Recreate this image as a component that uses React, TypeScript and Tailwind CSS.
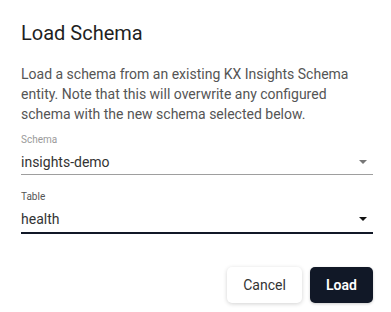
import React from 'react';

const Arrow: React.FC<{ color: string }> = ({ color }) => (
  <svg width="8" height="4" viewBox="0 0 8 4" className="shrink-0">
    <path d="M0 0 L8 0 L4 4 Z" fill={color} />
  </svg>
);

interface SelectFieldProps {
  label: string;
  value: string;
  focused?: boolean;
}

const SelectField: React.FC<SelectFieldProps> = ({ label, value, focused }) => (
  <div className="flex flex-col">
    <span
      className={`text-[10px] leading-[12px] ${focused ? 'text-[#555555]' : 'text-[#9a9a9a]'}`}
    >
      {label}
    </span>
    <div
      className={`mt-[6px] flex items-center justify-between pr-[6px] ${
        focused ? 'border-b-2 border-[#111827] pb-[3px]' : 'border-b border-[#9e9e9e] pb-[2px]'
      }`}
    >
      <span className="text-[14px] leading-[20px] text-[#333333]">{value}</span>
      <Arrow color={focused ? '#111111' : '#777777'} />
    </div>
  </div>
);

export default function App() {
  return (
    <div
      className="w-[391px] h-[312px] bg-white pl-[21px] pr-[18px] pt-[19px]"
      style={{ fontFamily: 'Roboto, "Liberation Sans", sans-serif' }}
    >
      <h2 className="text-[20px] leading-[28px] text-[#1f1f1f]">Load Schema</h2>
      <p className="mt-[17px] text-[14px] leading-[20px] text-[#555555]">
        Load a schema from an existing KX Insights Schema entity. Note that this will overwrite any
        configured schema with the new schema selected below.
      </p>
      <div className="mt-[10px]">
        <SelectField label="Schema" value="insights-demo" />
      </div>
      <div className="mt-[16px]">
        <SelectField label="Table" value="health" focused />
      </div>
      <div className="mt-[33px] flex justify-end gap-[8px]">
        <button className="h-[36px] w-[75px] rounded-[5px] bg-white text-[14px] font-normal text-[#333333] shadow-[0_1px_4px_rgba(0,0,0,0.18)]">
          Cancel
        </button>
        <button className="h-[36px] w-[63px] rounded-[5px] bg-[#111827] text-[14px] font-semibold text-white shadow-[0_1px_3px_rgba(0,0,0,0.2)]">
          Load
        </button>
      </div>
    </div>
  );
}
